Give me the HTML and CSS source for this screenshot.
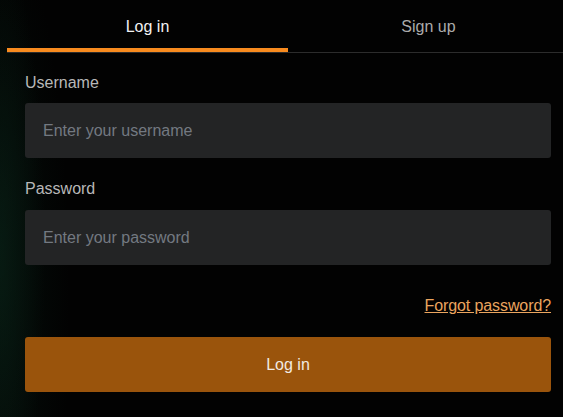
FILE: index.html
```html
<!DOCTYPE html>
<html lang="en">
<head>
<meta charset="utf-8">
<title>Log in</title>
<link rel="stylesheet" href="styles.css">
</head>
<body>
<div class="card">
  <div class="tabs">
    <div class="tab active">Log in</div>
    <div class="tab">Sign up</div>
  </div>
  <form class="form">
    <div class="field">
      <label class="label" for="u">Username</label>
      <input class="input" id="u" type="text" placeholder="Enter your username">
    </div>
    <div class="field">
      <label class="label" for="p">Password</label>
      <input class="input" id="p" type="password" placeholder="Enter your password">
    </div>
    <div class="forgot-row"><a class="forgot" href="#">Forgot password?</a></div>
    <button class="submit" type="button">Log in</button>
  </form>
</div>
</body>
</html>
```
FILE: styles.css
```css
html, body {
  margin: 0;
  padding: 0;
  overflow: hidden;
  height: 100%;
}
body {
  background-color: #020202;
  background-image:
    radial-gradient(ellipse 45px 300px at 0px 250px, rgba(10, 38, 26, 0.55), rgba(0, 0, 0, 0) 100%),
    radial-gradient(ellipse 70px 380px at 0px 300px, rgba(6, 24, 16, 0.5), rgba(0, 0, 0, 0) 100%);
  font-family: "Liberation Sans", Arial, sans-serif;
  font-size: 16px;
  color: #ddd;
}
.card {
  margin-left: 7px;
  width: 562px;
}
.tabs {
  display: flex;
  border-bottom: 1px solid #2c2c2c;
}
.tab {
  flex: 1;
  text-align: center;
  padding-top: 18px;
  line-height: 18px;
  height: 30px;
  border-bottom: 4px solid transparent;
  color: #ababab;
}
.tab.active {
  color: #f2f2f2;
  border-bottom-color: #f88b1f;
}
.form {
  padding: 21px 18px 0;
  display: flex;
  flex-direction: column;
}
.field {
  display: flex;
  flex-direction: column;
}
.field + .field {
  margin-top: 22px;
}
.label {
  line-height: 18px;
  color: #b8b8b8;
  margin-bottom: 11px;
}
.field + .field .label {
  margin-bottom: 12px;
}
.input {
  box-sizing: border-box;
  height: 55px;
  border: none;
  outline: none;
  border-radius: 3px;
  background: #232425;
  padding: 0 18px;
  font-family: inherit;
  font-size: 16px;
  color: #ddd;
}
.input::placeholder {
  color: #737981;
}
.forgot-row {
  display: flex;
  justify-content: flex-end;
  margin-top: 32px;
  line-height: 18px;
}
.forgot {
  color: #eba55f;
  text-decoration: underline;
  letter-spacing: -0.1px;
}
.submit {
  margin-top: 22px;
  height: 55px;
  border: none;
  border-radius: 3px;
  background: #9a540c;
  color: #f2eae2;
  font-family: inherit;
  font-size: 16px;
}
```
